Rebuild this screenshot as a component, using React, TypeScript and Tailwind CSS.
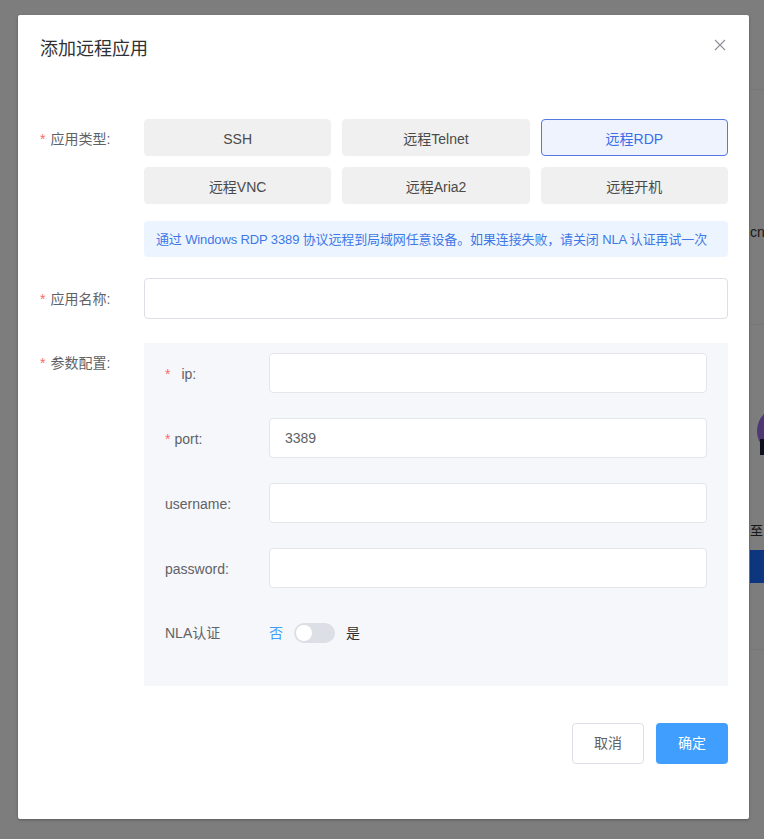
import { useState } from 'react';

const TYPES = ['SSH', '远程Telnet', '远程RDP', '远程VNC', '远程Aria2', '远程开机'];

const PARAMS = [
	{ key: 'ip', label: 'ip:', required: true, value: '', gap: 'mr-[11px]' },
	{ key: 'port', label: 'port:', required: true, value: '3389', gap: 'mr-[4px]' },
	{ key: 'username', label: 'username:', required: false, value: '', gap: '' },
	{ key: 'password', label: 'password:', required: false, value: '', gap: '' },
];

function Star({ className = 'mr-[5px]' }: { className?: string }) {
	return <span className={`text-[#f56c6c] ${className}`}>*</span>;
}

function BackgroundPage() {
	return (
		<div className="flex h-full bg-[#fbfbfb]">
			<div className="w-[750px] shrink-0" />
			<div className="flex flex-1 flex-col text-[14px] text-[#303133]">
				<div className="h-[90px] border-b border-[#eeeeee]" />
				<p className="mt-[132px] leading-[20px] whitespace-nowrap">cn</p>
				<div className="mt-[82px] border-b border-[#eeeeee]" />
				<div className="ml-[7px] mt-[82px] h-[48px] w-[48px] rounded-full bg-[#9d6fe6]" />
				<div className="ml-[10px] -mt-[16px] h-[16px] w-[40px] bg-[#1c1f3a]" />
				<p className="mt-[66px] text-[13px] leading-[20px] whitespace-nowrap">至</p>
				<div className="mt-[9px] h-[33px] bg-[#1b6cff]" />
				<div className="mt-[66px] border-b border-[#eeeeee]" />
			</div>
		</div>
	);
}

export default function App() {
	const [type, setType] = useState('远程RDP');
	const [nla, setNla] = useState(false);

	return (
		<div className="relative h-[839px] w-full overflow-hidden font-['Liberation_Sans','Noto_Sans_CJK_SC',sans-serif]">
			<BackgroundPage />
			<div className="absolute inset-0 bg-black/50" />

			{/* Dialog */}
			<div className="absolute left-[18px] top-[15px] w-[731px] rounded-[2px] bg-white shadow-[0_1px_3px_rgba(0,0,0,0.3)]">
				<div className="relative flex h-[66px] items-center px-[22px]">
					<h2 className="pt-[2px] text-[18px] leading-[24px] text-[#303133]">添加远程应用</h2>
					<button className="absolute right-[22px] top-[23px] flex h-[14px] w-[14px] items-center justify-center text-[#909399]">
						<svg width="12" height="12" viewBox="0 0 12 12" fill="none" stroke="currentColor" strokeWidth="1.2">
							<path d="M1 1L11 11M11 1L1 11" />
						</svg>
					</button>
				</div>

				<div className="px-[21px] pl-[22px] pt-[38px] text-[14px]">
					{/* 应用类型 */}
					<div className="flex">
						<label className="flex h-[37px] w-[104px] shrink-0 items-center pt-[3px] text-[#606266]">
							<Star />
							应用类型:
						</label>
						<div className="flex-1">
							<div className="grid grid-cols-3 gap-x-[11px] gap-y-[11px]">
								{TYPES.map((t) => (
									<button
										key={t}
										onClick={() => setType(t)}
										className={`h-[37px] rounded-[4px] border pt-[3px] text-[14px] ${
											type === t
												? 'border-[#5479e0] bg-[#eef3fd] text-[#3a6ee8]'
												: 'border-[#f0f0f0] bg-[#f0f0f0] text-[#4a4a4a]'
										}`}
									>
										{t}
									</button>
								))}
							</div>
							<div className="mt-[17px] flex h-[36px] items-center rounded-[4px] bg-[#ecf5ff] px-[12px] pt-[1px] text-[13px] tracking-[-0.13px] whitespace-nowrap text-[#3f78e6]">
								通过 Windows RDP 3389 协议远程到局域网任意设备。如果连接失败，请关闭 NLA 认证再试一次
							</div>
						</div>
					</div>

					{/* 应用名称 */}
					<div className="mt-[21px] flex">
						<label className="flex h-[41px] w-[104px] shrink-0 items-center pt-[1px] text-[#606266]">
							<Star />
							应用名称:
						</label>
						<input className="h-[41px] flex-1 rounded-[4px] border border-[#dcdfe6] bg-white px-[15px] outline-none" />
					</div>

					{/* 参数配置 */}
					<div className="mt-[24px] flex">
						<label className="flex h-[40px] w-[104px] shrink-0 items-center self-start pt-[1px] text-[#606266]">
							<Star />
							参数配置:
						</label>
						<div className="flex-1 bg-[#f6f7fb] px-[21px] pt-[10px] pb-[43px]">
							<div className="flex flex-col gap-[25px]">
								{PARAMS.map((p) => (
									<div key={p.key} className="flex items-center">
										<label className="flex w-[104px] shrink-0 items-center pt-[2px] text-[#606266]">
											{p.required && <Star className={p.gap} />}
											{p.label}
										</label>
										<input
											defaultValue={p.value}
											className="h-[40px] flex-1 rounded-[4px] border border-[#e4e6eb] bg-white px-[15px] text-[14px] text-[#606266] outline-none"
										/>
									</div>
								))}
							</div>
							<div className="mt-[35px] flex h-[20px] items-center">
								<span className="w-[104px] shrink-0 text-[#606266]">NLA认证</span>
								<span className={nla ? 'text-[#303133]' : 'text-[#409eff]'}>否</span>
								<button
									onClick={() => setNla(!nla)}
									className={`mx-[11px] flex h-[20px] w-[41px] items-center rounded-full px-[2px] ${
										nla ? 'justify-end bg-[#409eff]' : 'justify-start bg-[#dcdfe6]'
									}`}
								>
									<span className="h-[16px] w-[16px] rounded-full bg-white" />
								</button>
								<span className={nla ? 'text-[#409eff]' : 'text-[#303133]'}>是</span>
							</div>
						</div>
					</div>
				</div>

				{/* Footer */}
				<div className="flex justify-end gap-[12px] px-[21px] pt-[37px] pb-[55px]">
					<button className="h-[41px] w-[72px] rounded-[4px] border border-[#dcdfe6] bg-white text-[14px] text-[#606266]">
						取消
					</button>
					<button className="h-[41px] w-[72px] rounded-[4px] bg-[#409eff] text-[14px] text-white">
						确定
					</button>
				</div>
			</div>
		</div>
	);
}
